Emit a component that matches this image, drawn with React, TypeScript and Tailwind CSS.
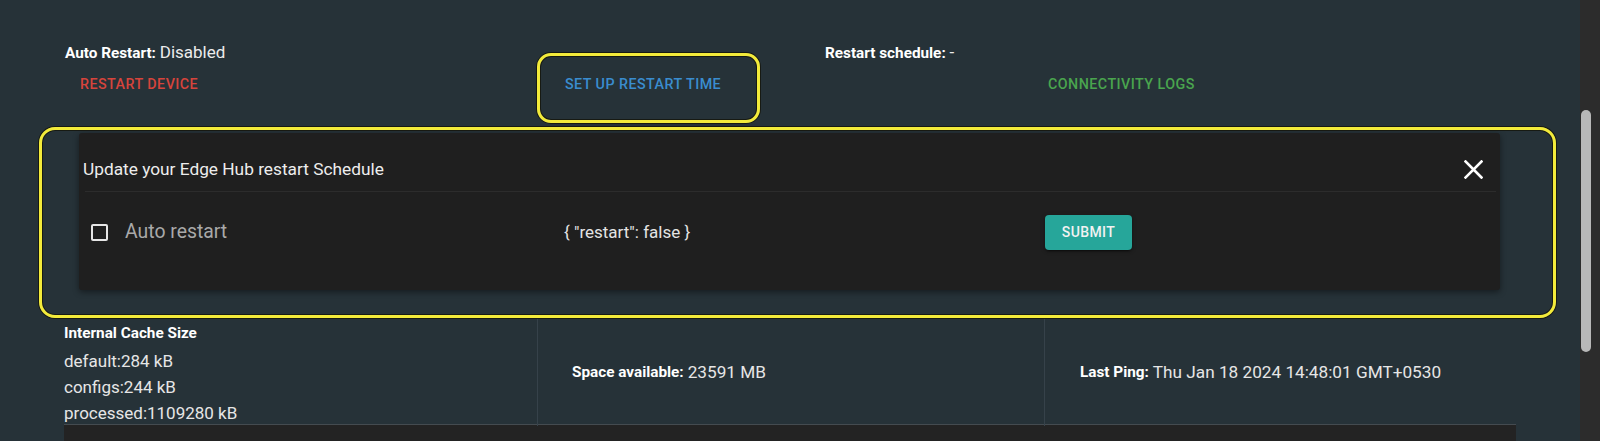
import React from "react";

function CloseIcon() {
  return (
    <svg width="19" height="19" viewBox="0 0 19 19" fill="none">
      <path d="M1.5 1.5 L17.5 17.5 M17.5 1.5 L1.5 17.5" stroke="#ffffff" strokeWidth="2.6" strokeLinecap="square" />
    </svg>
  );
}

export default function App() {
  return (
    <div className="relative flex h-[441px] w-[1600px] overflow-hidden bg-[#263238] font-[Roboto,sans-serif]">
      <div className="w-[1580px] shrink-0">
        <div className="ml-[64px] w-[1452px] pt-[40px]">
          {/* top labels */}
          <div className="grid h-[24px] grid-cols-2 items-baseline leading-[24px]">
            <div className="pl-[1px]">
              <span className="text-[15.3px] font-bold text-white">Auto Restart: </span>
              <span className="text-[17px] text-[#ececec]">Disabled</span>
            </div>
            <div className="pl-[35px]">
              <span className="text-[15.3px] font-bold text-white">Restart schedule: </span>
              <span className="text-[17px] text-[#ececec]">-</span>
            </div>
          </div>
          {/* buttons */}
          <div className="mt-[6px] grid h-[30px] grid-cols-3">
            <div className="flex items-center">
              <button className="ml-[8px] h-[30px] px-[8px] text-[14.3px] font-medium uppercase tracking-[0.45px] text-[#d6443c]">
                Restart Device
              </button>
            </div>
            <div className="flex items-center">
              <button className="ml-[9px] h-[30px] px-[8px] text-[14.3px] font-medium uppercase tracking-[0.45px] text-[#3a8dcf]">
                Set up restart time
              </button>
            </div>
            <div className="flex items-center">
              <button className="ml-[8px] h-[30px] px-[8px] text-[14.3px] font-medium uppercase tracking-[0.45px] text-[#4aa54e]">
                Connectivity logs
              </button>
            </div>
          </div>

          {/* modal panel */}
          <div className="ml-[15px] mt-[33px] h-[157px] w-[1421px] rounded-[3px] bg-[#1f1f1f] shadow-[0_2px_6px_rgba(0,0,0,0.45)]">
            <div className="ml-[6px] mr-[4px] flex items-center justify-between border-b border-[#2c2c2c] pb-[10px] pt-[24px]">
              <span className="-ml-[2px] text-[17.3px] leading-[24px] text-[#ededed]">Update your Edge Hub restart Schedule</span>
              <span className="mr-[13px] flex items-center">
                <CloseIcon />
              </span>
            </div>
            <div className="ml-[6px] grid h-[80px] grid-cols-[479px_481px_1fr] items-center">
              <div className="flex items-center">
                <span className="ml-[6px] h-[17px] w-[17px] rounded-[2px] border-[2px] border-[#e6e6e6]" />
                <span className="ml-[17px] text-[19.4px] leading-[24px] text-[#a9a9a9]">Auto restart</span>
              </div>
              <div className="text-[17px] leading-[24px] text-[#e4e4e4]">{'{ "restart": false }'}</div>
              <div>
                <button className="h-[35px] w-[87px] rounded-[4px] bg-[#26a69a] text-[14px] font-medium uppercase tracking-[0.4px] text-[#f2f2f2] shadow-[0_3px_1px_-2px_rgba(0,0,0,0.3),0_2px_2px_0_rgba(0,0,0,0.2),0_1px_5px_0_rgba(0,0,0,0.2)]">
                  Submit
                </button>
              </div>
            </div>
          </div>

          {/* bottom info row */}
          <div className="mt-[29px] grid h-[106px] grid-cols-[473px_507px_472px] border-b border-[#444b50]">
            <div className="pt-[3px]">
              <div className="text-[15.3px] font-bold leading-[22px] text-white">Internal Cache Size</div>
              <div className="mt-[4px] text-[17px] leading-[26px] text-[#e6e6e6]">
                <div>default:284 kB</div>
                <div>configs:244 kB</div>
                <div>processed:1109280 kB</div>
              </div>
            </div>
            <div className="flex items-center border-l border-[#36424a] pl-[34px]">
              <span className="text-[15.3px] font-bold text-white">Space available: </span>
              <span className="ml-[4px] text-[17.2px] text-[#e6e6e6]">23591 MB</span>
            </div>
            <div className="flex items-center border-l border-[#36424a] pl-[35px]">
              <span className="text-[15.3px] font-bold text-white">Last Ping: </span>
              <span className="ml-[4px] text-[17.2px] text-[#e6e6e6]">Thu Jan 18 2024 14:48:01 GMT+0530</span>
            </div>
          </div>
          <div className="h-[20px] bg-[#232323]" />
        </div>
      </div>

      {/* scrollbar */}
      <div className="relative w-[20px] shrink-0 bg-[#2c2c2c]">
        <div className="absolute left-[1px] top-[110px] h-[242px] w-[10px] rounded-[5px] bg-[#b8b8b8]" />
      </div>

      {/* annotation overlays */}
      <div className="pointer-events-none absolute left-[537px] top-[53px] h-[70px] w-[223px] rounded-[14px] border-[3px] border-[#f3eb3a] shadow-[0_0_0_1px_rgba(20,20,10,0.8),inset_0_0_0_1px_rgba(20,20,10,0.8)]" />
      <div className="pointer-events-none absolute left-[39px] top-[127px] h-[191px] w-[1517px] rounded-[16px] border-[3px] border-[#f3eb3a] shadow-[0_0_0_1px_rgba(20,20,10,0.8),inset_0_0_0_1px_rgba(20,20,10,0.8)]" />
    </div>
  );
}
